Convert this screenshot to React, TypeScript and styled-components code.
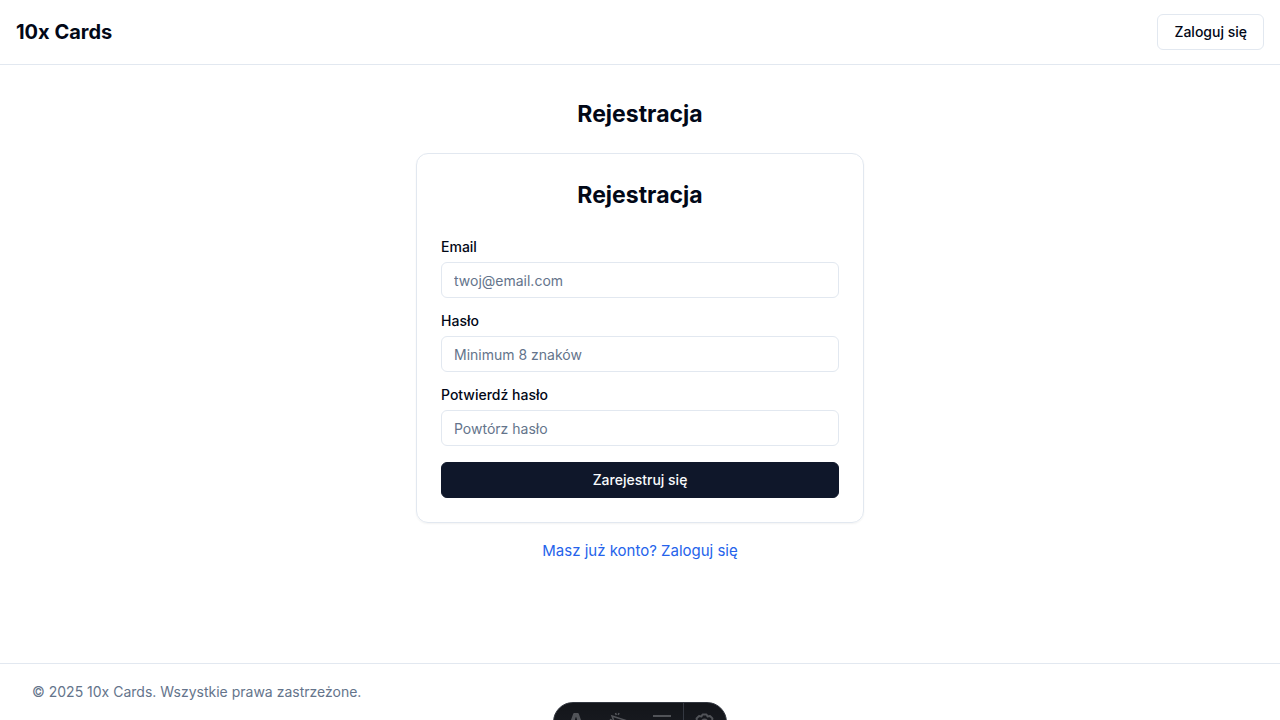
import React, { useId } from "react";
import styled, { createGlobalStyle } from "styled-components";

const GlobalStyle = createGlobalStyle`
  *, *::before, *::after { box-sizing: border-box; }
  body {
    margin: 0;
    background: #ffffff;
    color: #020817;
    font-family: Inter, "Liberation Sans", sans-serif;
    font-size: 15px;
    line-height: 24px;
    -webkit-font-smoothing: antialiased;
  }
`;

const Page = styled.div`
  display: flex;
  flex-direction: column;
  min-height: 100vh;
`;

const Header = styled.header`
  display: flex;
  align-items: center;
  justify-content: space-between;
  min-height: 65px;
  padding: 0 16px;
  border-bottom: 1px solid #e2e8f0;
`;

const Brand = styled.a`
  color: inherit;
  font-size: 20px;
  font-weight: 700;
  line-height: 28px;
  text-decoration: none;
`;

const Button = styled.button<{ $primary?: boolean }>`
  width: ${(p) => (p.$primary ? "100%" : "auto")};
  height: 36px;
  padding: 0 16px;
  border: 1px solid ${(p) => (p.$primary ? "#0f172a" : "#e2e8f0")};
  border-radius: 6px;
  background: ${(p) => (p.$primary ? "#0f172a" : "#ffffff")};
  color: ${(p) => (p.$primary ? "#f8fafc" : "#020817")};
  font: inherit;
  font-size: 14px;
  font-weight: 500;
  line-height: 20px;
  cursor: pointer;
`;

const Main = styled.main`
  flex: 1;
  width: 100%;
  max-width: 480px;
  margin: 0 auto;
  padding: 32px 16px;
  text-align: center;
`;

const Title = styled.h1`
  margin: 0;
  font-size: 23px;
  font-weight: 700;
  line-height: 34px;
`;

const Card = styled.section`
  margin: 22px 0 16px;
  padding: 24px;
  border: 1px solid #e2e8f0;
  border-radius: 12px;
  box-shadow: 0 1px 2px rgba(0, 0, 0, 0.05);
`;

const Form = styled.form`
  display: flex;
  flex-direction: column;
  gap: 16px;
  margin-top: 28px;
  text-align: left;
`;

const Field = styled.div`
  display: flex;
  flex-direction: column;
  gap: 8px;
`;

const Label = styled.label`
  font-size: 14px;
  font-weight: 500;
  line-height: 14px;
`;

const Input = styled.input`
  width: 100%;
  height: 36px;
  padding: 4px 12px;
  border: 1px solid #e2e8f0;
  border-radius: 6px;
  background: transparent;
  color: inherit;
  font: inherit;
  font-size: 14px;
  &::placeholder { color: #64748b; opacity: 1; }
`;

const LoginLink = styled.a`
  color: #2563eb;
  text-decoration: none;
  &:hover { text-decoration: underline; }
`;

const Footer = styled.footer`
  display: flex;
  align-items: center;
  min-height: 57px;
  padding: 0 32px;
  border-top: 1px solid #e2e8f0;
  color: #64748b;
  font-size: 14px;
  line-height: 20px;
`;

const DevBar = styled.div`
  position: fixed;
  bottom: -22px;
  left: 50%;
  display: flex;
  height: 40px;
  overflow: hidden;
  border: 1px solid #343841;
  border-radius: 20px;
  background: linear-gradient(180deg, #13151a 0%, #1b1d23 100%);
  transform: translateX(-50%);
`;

const DevButton = styled.button<{ $divided?: boolean }>`
  display: flex;
  align-items: center;
  justify-content: center;
  width: 43px;
  padding: 0;
  border: 0;
  border-left: ${(p) => (p.$divided ? "1px solid #343841" : "0")};
  background: none;
  color: #515358;
  svg { display: block; }
`;

interface TextFieldProps {
  label: string;
  type: string;
  placeholder: string;
}

function TextField({ label, type, placeholder }: TextFieldProps) {
  const id = useId();
  return (
    <Field>
      <Label htmlFor={id}>{label}</Label>
      <Input id={id} type={type} placeholder={placeholder} />
    </Field>
  );
}

function DevToolbar() {
  return (
    <DevBar>
      <DevButton type="button" aria-label="Menu">
        <svg width="16" height="20" viewBox="0 0 16 20" fill="currentColor">
          <path d="M6.2 1h3.6c.5 0 .8.2 1 .7L15.5 15c-1.4-.7-3-1.200-4.700-1.400L8.400 5.500a.4.400 0 0 0-.8 0L5.200 13.600C3.500 13.800 1.900 14.300.5 15L5.200 1.700c.2-.5.500-.7 1-.7Z" />
        </svg>
      </DevButton>
      <DevButton type="button" aria-label="Inspect">
        <svg width="20" height="20" viewBox="0 0 20 20" fill="none" stroke="currentColor" strokeWidth="1.6">
          <path d="M3 4 15.500 8l-5.500 2.300L7.500 16 3 4Z" />
          <path d="M6.500 1l.8 2M10 1l-.8 2M.8 7.500l2 .5" />
        </svg>
      </DevButton>
      <DevButton type="button" aria-label="Audit">
        <svg width="20" height="20" viewBox="0 0 20 20" fill="none" stroke="currentColor" strokeWidth="2">
          <path d="M1 4h18M1 10h9M1 16h8M15.500 8.500v6M15.500 16v2" />
        </svg>
      </DevButton>
      <DevButton type="button" aria-label="Settings" $divided>
        <svg width="20" height="20" viewBox="0 0 20 20" fill="none" stroke="currentColor" strokeWidth="1.800" strokeLinejoin="round">
          <path d="M7.500 2.500h4l1 2 2.500-.5 2.500 2.500-.5 2.500 2 1v2l-2 1 .5 2.500-2.500 2.500-2.500-.5-1 1.500h-4l-1-1.500-2.500.5L1.500 15.500l.5-2.500-1-1v-2l1-1-.5-2.500L4 4l2.500.5 1-2Z" />
          <circle cx="9.500" cy="11" r="3.500" />
        </svg>
      </DevButton>
    </DevBar>
  );
}

export default function App() {
  return (
    <>
      <GlobalStyle />
      <Page>
        <Header>
          <Brand href="#">10x Cards</Brand>
          <Button type="button">Zaloguj się</Button>
        </Header>
        <Main>
          <Title>Rejestracja</Title>
          <Card>
            <Title as="h2">Rejestracja</Title>
            <Form onSubmit={(e) => e.preventDefault()}>
              <TextField label="Email" type="email" placeholder="twoj@email.com" />
              <TextField label="Hasło" type="password" placeholder="Minimum 8 znaków" />
              <TextField label="Potwierdź hasło" type="password" placeholder="Powtórz hasło" />
              <Button type="submit" $primary>Zarejestruj się</Button>
            </Form>
          </Card>
          <LoginLink href="#">Masz już konto? Zaloguj się</LoginLink>
        </Main>
        <Footer>© 2025 10x Cards. Wszystkie prawa zastrzeżone.</Footer>
      </Page>
      <DevToolbar />
    </>
  );
}
